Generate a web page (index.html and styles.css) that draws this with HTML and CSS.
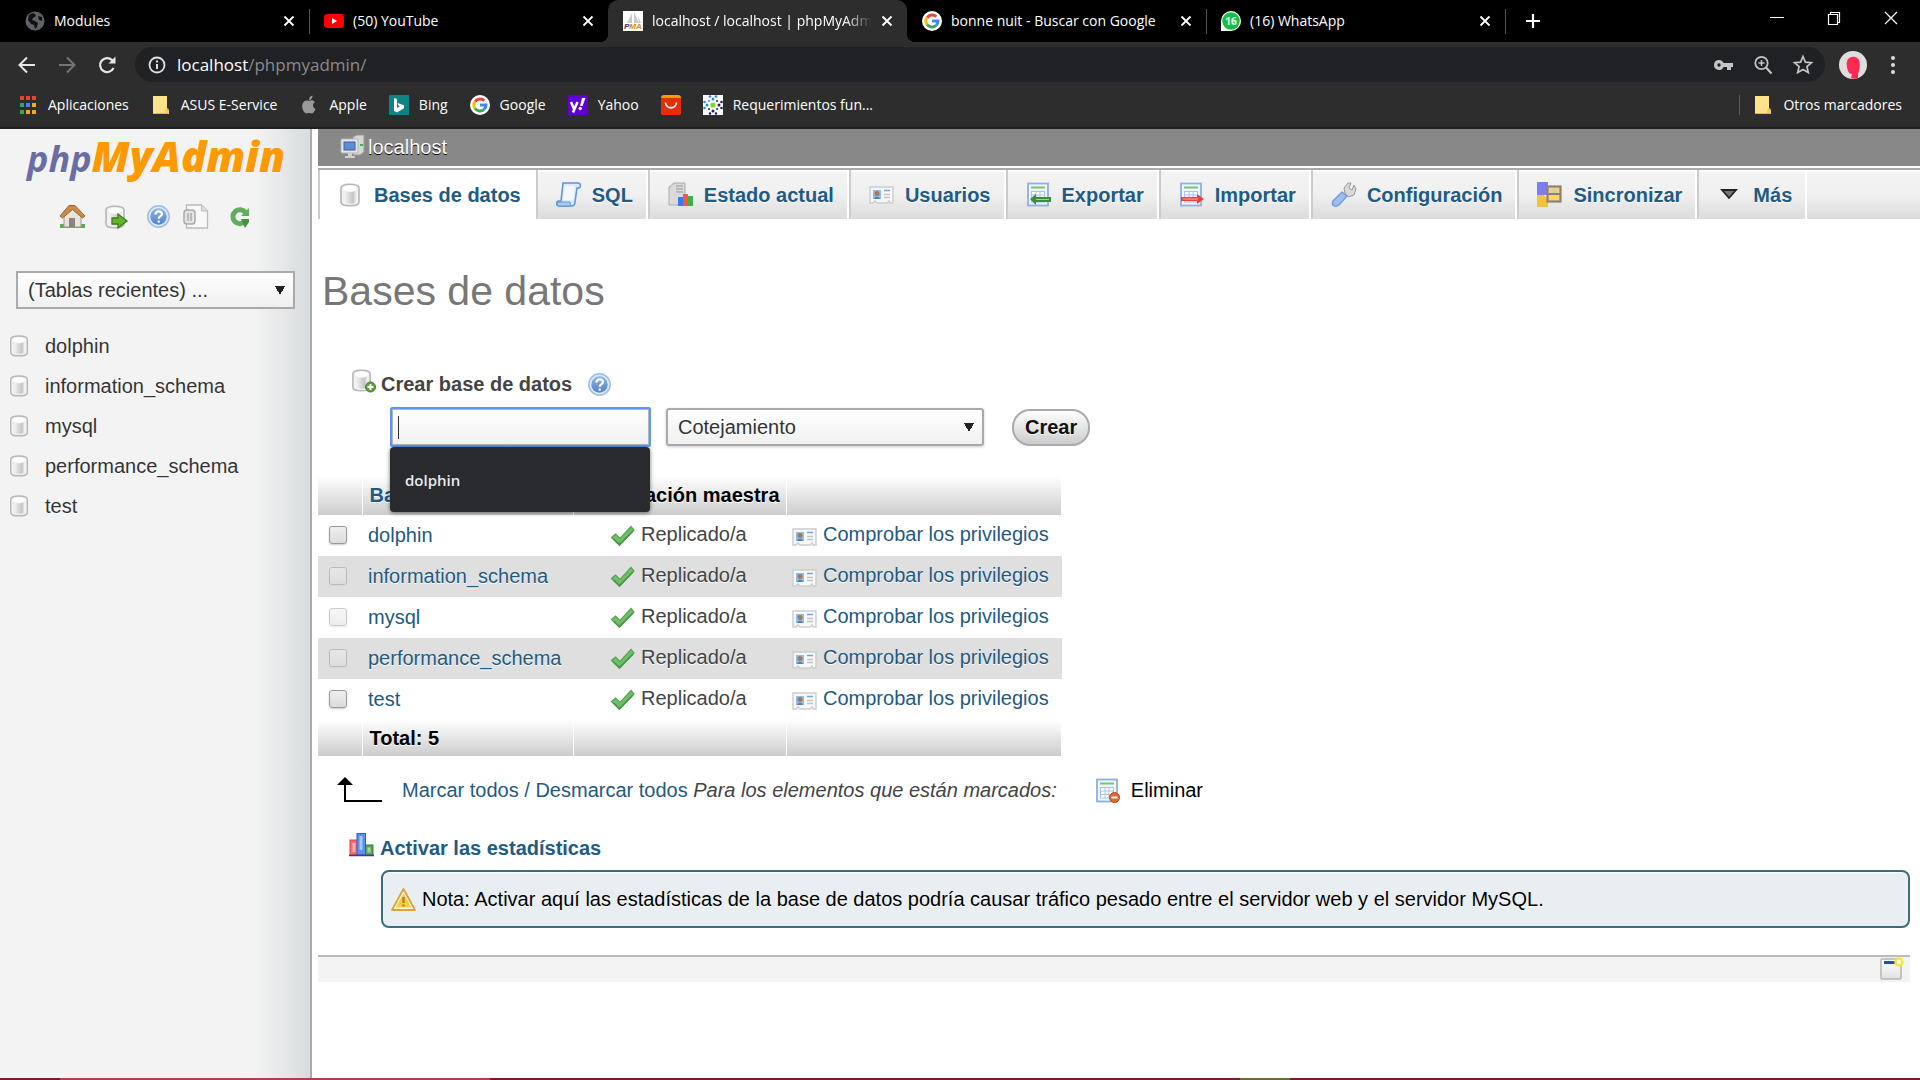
FILE: index.html
```html
<!DOCTYPE html>
<html lang="es">
<head>
<meta charset="utf-8">
<title>localhost / localhost | phpMyAdmin</title>
<link rel="stylesheet" href="styles.css">
</head>
<body>
<svg class="defs" aria-hidden="true">
  <defs>
    <linearGradient id="g-metal" x1="0" x2="1"><stop offset="0" stop-color="#f4f4f4"/><stop offset=".45" stop-color="#d8d8d8"/><stop offset=".75" stop-color="#c4c4c4"/><stop offset="1" stop-color="#ececec"/></linearGradient>
    <linearGradient id="g-blue" x1="0" x2="0" y1="0" y2="1"><stop offset="0" stop-color="#8fb6e6"/><stop offset="1" stop-color="#4f83c8"/></linearGradient>
    <linearGradient id="g-page" x1="0" x2="0" y1="0" y2="1"><stop offset="0" stop-color="#fff"/><stop offset="1" stop-color="#e2e2e2"/></linearGradient>
  </defs>
  <symbol id="close" viewBox="0 0 12 12"><path d="M1.500 1.500l9 9M10.500 1.500l-9 9" stroke="#fff" stroke-width="1.800" fill="none"/></symbol>
  <symbol id="google" viewBox="0 0 20 20"><circle cx="10" cy="10" r="10" fill="#fff"/><g fill="none" stroke-width="3"><path d="M5.200 6.500A6 6 0 0 1 14.300 5.800" stroke="#ea4335"/><path d="M5.100 13.500A6 6 0 0 1 5.200 6.500" stroke="#fbbc05"/><path d="M14 14.500A6 6 0 0 1 5.100 13.500" stroke="#34a853"/><path d="M10 10h6A6 6 0 0 1 14 14.500" stroke="#4285f4"/></g></symbol>
  <symbol id="folder" viewBox="0 0 20 20"><path d="M2 1h14v13l2 1v4H2z" fill="#ffe38b"/><path d="M2 18.500h15v-5l-2 1v4" fill="none" stroke="#e2b53c"/></symbol>
  <symbol id="db" viewBox="0 0 25 25"><path d="M3 6c0-5 18-5 18 0v14c0 5-18 5-18 0z" fill="#f1f1f1" stroke="#b6b6b6" stroke-width="1.600"/><path d="M6 8c3 3 9 3 12 0v12c-3 2-9 2-12 0z" fill="url(#g-metal)"/><ellipse cx="12" cy="6.500" rx="6.500" ry="3" fill="#fff"/></symbol>
  <symbol id="help" viewBox="0 0 25 25"><circle cx="12.500" cy="12.500" r="10.700" fill="#dce9f8" stroke="#9dbce2" stroke-width="1.500"/><circle cx="12.500" cy="12.500" r="8.200" fill="url(#g-blue)"/><path d="M9.500 10.500c0-4 6.500-4 6.500-.5 0 2.300-3.300 2-3.300 4.700M12.700 16.500v2.200" fill="none" stroke="#fff" stroke-width="2.200"/></symbol>
  <symbol id="tick" viewBox="0 0 25 25"><path d="M1.500 13.500l4-3.500 4.500 4.500L21 2.500l3 3.500L9.500 21.500z" fill="#6fbf68" stroke="#58a354" stroke-width="1.200"/><path d="M3.500 15l6 5.500L23 7" fill="none" stroke="#4a9447" stroke-width="1.500"/></symbol>
  <symbol id="card" viewBox="0 0 25 25"><path d="M1 5h23v16h-3l-1-2-2 2H8l-2-2-2 2H1z" fill="#f8f8f8" stroke="#cdcdcd" stroke-width="1.400"/><rect x="4" y="8" width="8" height="9" fill="#8abdf0"/><circle cx="8" cy="11.500" r="2.500" fill="#a87a54"/><path d="M5 17c1-3 5-3 6 0z" fill="#4a80c0"/><path d="M15 8.500h6" stroke="#6ea6e0" stroke-width="1.500"/><path d="M15 12.500h6M15 15.500h6" stroke="#c4c4c4" stroke-width="1.300"/></symbol>
  <symbol id="sheet" viewBox="0 0 25 25"><rect x="2" y="1.500" width="20" height="22" fill="#eef5fd" stroke="#8fb0e0" stroke-width="1.800"/><path d="M5 5.500h14" stroke="#7cc56e" stroke-width="2"/><rect x="5" y="9" width="14" height="11" fill="#fff"/><path d="M5 9.500h14M5 13h14M5 16.500h14M5 20h14M5.500 9v11M10 9v11M14 9v11M18.500 9v11" stroke="#a9c3e6" fill="none"/></symbol>
</svg>

<header class="browser">
  <div class="tabstrip">
    <div class="tab"><svg class="fav" viewBox="0 0 20 20"><circle cx="10" cy="10" r="9.500" fill="#5f6368"/><path d="M4 4c3-2 5-2 6-1l1 2-3 2-1 2 3 1 3 2-1 4-2 2-1-4-3-1-3-4zM13 5l4 1v4l-3-1z" fill="#111"/></svg><span class="tab-title">Modules</span><button class="x" aria-label="Cerrar"><svg><use href="#close"/></svg></button></div>
    <div class="tab sep"><svg class="fav" viewBox="0 0 20 20"><rect y="3" width="20" height="14" rx="3.500" fill="#f00"/><path d="M8 7l5 3-5 3z" fill="#fff"/></svg><span class="tab-title">(50) YouTube</span><button class="x" aria-label="Cerrar"><svg><use href="#close"/></svg></button></div>
    <div class="tab active"><svg class="fav" viewBox="0 0 20 20"><rect width="20" height="20" fill="#fff"/><path d="M9 2L4 12h5zM11 1v11h5zM15 5l3 7h-2z" fill="#c9c9c9"/><text x="1" y="18" font-size="8" font-family="Liberation Sans, sans-serif" font-weight="bold" font-style="italic" fill="#333366">P<tspan fill="#d58a10">MA</tspan></text></svg><span class="tab-title">localhost / localhost | phpMyAdmin</span><button class="x" aria-label="Cerrar"><svg><use href="#close"/></svg></button></div>
    <div class="tab"><svg class="fav"><use href="#google"/></svg><span class="tab-title">bonne nuit - Buscar con Google</span><button class="x" aria-label="Cerrar"><svg><use href="#close"/></svg></button></div>
    <div class="tab sep"><svg class="fav" viewBox="0 0 20 20"><path d="M0 20V10A10 10 0 1 1 10 20z" fill="#fff"/><circle cx="10" cy="10" r="8.800" fill="#12c143"/><text x="10" y="14" text-anchor="middle" font-size="10" font-weight="bold" font-family="Open Sans, sans-serif" fill="#fff">16</text></svg><span class="tab-title">(16) WhatsApp</span><button class="x" aria-label="Cerrar"><svg><use href="#close"/></svg></button></div>
    <button class="newtab sep" aria-label="Nueva pestaña"><svg viewBox="0 0 16 16"><path d="M8 1v14M1 8h14" stroke="#fff" stroke-width="2.200"/></svg></button>
    <div class="winctl">
      <button aria-label="Minimizar"><svg viewBox="0 0 14 14"><path d="M0 6.500h14" stroke="#fff"/></svg></button>
      <button aria-label="Restaurar"><svg viewBox="0 0 14 14"><path d="M1.500 3.500h9v10h-9zM3.500 3V1.500h9v10H11" fill="none" stroke="#fff" stroke-width="1.200"/></svg></button>
      <button aria-label="Cerrar ventana"><svg viewBox="0 0 14 14"><path d="M1 1l12 12M13 1L1 13" stroke="#fff" stroke-width="1.200"/></svg></button>
    </div>
  </div>

  <div class="toolbar">
    <button class="tool" aria-label="Atrás"><svg viewBox="0 0 20 20"><path d="M18 10H3M10 2.500L2.500 10l7.500 7.500" fill="none" stroke="#e6e6e6" stroke-width="2"/></svg></button>
    <button class="tool" aria-label="Adelante"><svg viewBox="0 0 20 20"><path d="M2 10h15M10 2.500l7.500 7.500-7.500 7.500" fill="none" stroke="#757575" stroke-width="2"/></svg></button>
    <button class="tool" aria-label="Recargar"><svg viewBox="0 0 20 20"><path d="M16.500 13A7 7 0 1 1 15 5l1.500 2" fill="none" stroke="#e6e6e6" stroke-width="2.200"/><path d="M18.500 1.500v7h-7z" fill="#e6e6e6"/></svg></button>
    <div class="omnibox">
      <svg viewBox="0 0 20 20"><circle cx="10" cy="10" r="7.500" fill="none" stroke="#e0e0e0" stroke-width="1.800"/><path d="M10 9v5M10 5.500v2" stroke="#e0e0e0" stroke-width="2"/></svg>
      <span class="url">localhost<span>/phpmyadmin/</span></span>
      <svg viewBox="0 0 20 20"><path d="M6 5a5 5 0 1 0 4.600 7H14v3h4v-3h2V8h-9.400A5 5 0 0 0 6 5zm0 3.300a1.700 1.700 0 1 1 0 3.400 1.700 1.700 0 0 1 0-3.400z" fill="#c4c4c4"/></svg>
      <svg viewBox="0 0 20 20"><circle cx="8.500" cy="8" r="6.200" fill="none" stroke="#c4c4c4" stroke-width="1.800"/><path d="M13 12.500l5.500 6" stroke="#c4c4c4" stroke-width="2.200"/><path d="M8.500 5v6M5.500 8h6" stroke="#c4c4c4" stroke-width="1.500"/></svg>
      <svg viewBox="0 0 20 20"><path d="M10 1.500l2.400 5.600 6.100.5-4.600 4 1.400 6-5.300-3.200-5.300 3.200 1.400-6-4.600-4 6.100-.5z" fill="none" stroke="#c4c4c4" stroke-width="1.700"/></svg>
    </div>
    <button class="avatar" aria-label="Perfil"><svg viewBox="0 0 28 28"><circle cx="14" cy="14" r="14" fill="#dedede"/><path d="M9 20C5 8 11 5 16 6c6 1 5 9 4 14l-1 3v4c-2 1-5 1-7 0l1-4c-2 0-3-1-4-3z" fill="#ff2850"/></svg></button>
    <button class="dots" aria-label="Menú"><svg viewBox="0 0 6 20"><circle cx="3" cy="3" r="2" fill="#ddd"/><circle cx="3" cy="10" r="2" fill="#ddd"/><circle cx="3" cy="17" r="2" fill="#ddd"/></svg></button>
  </div>

  <nav class="bookmarks">
    <a href="#"><svg viewBox="0 0 20 20"><path d="M2 1h4v4H2zM8 1h4v4H8zM14 1h4v4h-4z" fill="#ea4335"/><path d="M2 8h4v4H2zM2 15h4v4H2z" fill="#34a853"/><path d="M8 8h4v4H8z" fill="#4285f4"/><path d="M14 8h4v4h-4zM8 15h4v4H8zM14 15h4v4h-4z" fill="#f5a623"/></svg>Aplicaciones</a>
    <a href="#"><svg><use href="#folder"/></svg>ASUS E-Service</a>
    <a href="#"><svg viewBox="0 0 20 20"><path d="M10 6c2-1 4-1.200 6 1-3 2-2.500 5.500.5 7-1 3-3 5-4.500 4.500-1.500-.6-2.500-.6-4 0C5.500 19 3 14.500 3.200 11 3.400 6.500 7 4.500 10 6zM10 5c0-2.500 1.500-4 3.500-4.500C13.700 3 12 5 10 5z" fill="#9a9a9a"/></svg>Apple</a>
    <a href="#"><svg viewBox="0 0 20 20"><rect width="20" height="20" fill="#0c8484"/><path d="M5 3l3 1v9l3-1.700-1.500-.8L8.500 8 15 10.300v3L8 17.500 5 16z" fill="#fff"/></svg>Bing</a>
    <a href="#"><svg><use href="#google"/></svg>Google</a>
    <a href="#"><svg viewBox="0 0 20 20"><rect width="20" height="20" fill="#6001d2"/><path d="M3 7l3 7M9.500 7L5 17.500" stroke="#fff" stroke-width="2.500" fill="none"/><path d="M14 3h3.500L14.500 11H12z" fill="#fff"/><circle cx="12.200" cy="13.500" r="1.700" fill="#fff"/></svg>Yahoo</a>
    <a href="#" aria-label="AliExpress"><svg viewBox="0 0 20 20"><rect width="20" height="20" rx="3" fill="#ff9a00"/><path d="M0 3h20v14a3 3 0 0 1-3 3H3a3 3 0 0 1-3-3z" fill="#e62e04"/><path d="M4.500 7.500c.5 7 10.500 7 11 0" fill="none" stroke="#fff" stroke-width="1.800"/></svg></a>
    <a href="#"><svg viewBox="0 0 20 20"><rect width="20" height="20" fill="#fff"/><circle cx="10" cy="10" r="2.600" fill="#6fe01c"/><g fill="#2c8bd0"><circle cx="7" cy="1.500" r="1.300"/><circle cx="13" cy="1.500" r="1.300"/><circle cx="10" cy="4" r="1.500"/><circle cx="1.500" cy="7" r="1.300"/><circle cx="4" cy="10" r="1.500"/><circle cx="1.500" cy="13" r="1.300"/><circle cx="6" cy="6" r="1"/></g><g fill="#20205c"><circle cx="18.500" cy="7" r="1.300"/><circle cx="16" cy="10" r="1.500"/><circle cx="18.500" cy="13" r="1.300"/><circle cx="7" cy="18.500" r="1.300"/><circle cx="13" cy="18.500" r="1.300"/><circle cx="10" cy="16" r="1.500"/><circle cx="14" cy="14" r="1"/><circle cx="6" cy="14" r="1"/><circle cx="14" cy="6" r="1"/></g></svg>Requerimientos fun...</a>
    <span class="others"><a href="#"><svg><use href="#folder"/></svg>Otros marcadores</a></span>
  </nav>
</header>

<div class="page">
  <aside class="side">
    <a class="logo" href="#"><span>php</span>MyAdmin</a>
    <nav class="side-icons">
      <a href="#" aria-label="Inicio"><svg viewBox="0 0 25 25"><path d="M0 20h25v4H0z" fill="#5da956"/><path d="M4 12l8.500-7 8.500 7v11H4z" fill="#e8e4dc" stroke="#a59c8c"/><path d="M9 14h6v9H9z" fill="#8b8580"/><path d="M0 12L9 1.500h6L25 12l-2.500 2L12.500 5.500 2.500 14z" fill="#c98a4a" stroke="#9b6430"/></svg></a>
      <a href="#" aria-label="Salir"><svg viewBox="-3 0 25 25"><use href="#db" x="-2" y="0" width="25" height="25"/><path d="M7 14h6v-4l9 7-9 7v-4H7z" fill="#64b32f" stroke="#3d7d1c" stroke-width="1.300"/></svg></a>
      <a href="#" aria-label="Documentación"><svg viewBox="-2 0 25 25"><use href="#help" width="25" height="25"/></svg></a>
      <a href="#" aria-label="Documentación de MySQL"><svg viewBox="3 0 25 25"><path d="M3.500 1h15l6 6v17h-21z" fill="#f8f8f8" stroke="#bbb" stroke-width="1.300"/><path d="M18.500 1v6h6" fill="#ddd" stroke="#bbb"/><rect x="1" y="6" width="11" height="14" rx="3" fill="#e4e4e4" stroke="#aaa" stroke-width="1.500"/><path d="M5 9v8M8 9v8" stroke="#aaa" stroke-width="1.500"/></svg></a>
      <a href="#" aria-label="Recargar"><svg viewBox="0 0 25 25"><path d="M17 17.500A7 7 0 1 1 17.500 8.500" fill="none" stroke="#5fae5b" stroke-width="5"/><path d="M13 12l8-8v8z" fill="#5fae5b"/><path d="M13 15h8v3l-4 6z" fill="#488f45"/></svg></a>
    </nav>
    <select class="recent" aria-label="Tablas recientes"><option>(Tablas recientes) ...</option></select>
    <ul class="dblist">
      <li><svg><use href="#db"/></svg><a href="#">dolphin</a></li>
      <li><svg><use href="#db"/></svg><a href="#">information_schema</a></li>
      <li><svg><use href="#db"/></svg><a href="#">mysql</a></li>
      <li><svg><use href="#db"/></svg><a href="#">performance_schema</a></li>
      <li><svg><use href="#db"/></svg><a href="#">test</a></li>
    </ul>
  </aside>

  <main class="main">
    <div class="server"><svg viewBox="0 0 25 25"><path d="M13 3l4-2h7v17l-4 3h-7z" fill="#d6d6d6" stroke="#999"/><path d="M20 11h3" stroke="#3bb54a" stroke-width="2"/><rect x="1" y="5" width="17" height="14" rx="1" fill="#e6e6e6" stroke="#b5b5b5"/><rect x="4" y="8" width="11" height="8" fill="#5f8bd8" stroke="#3d5f9c"/><path d="M8 19h4v3h3v2H5v-2h3z" fill="#cfcfcf"/></svg><a href="#">localhost</a></div>
    <nav class="menu">
      <a class="on" href="#"><svg><use href="#db"/></svg>Bases de datos</a>
      <a href="#"><svg viewBox="0 0 25 25"><path d="M7 1h15c3 0 3 5 1 5h-2l-2 14c0 3-2 4-4 4H3c-3 0-3-5 0-5h2z" fill="#dcebfb" stroke="#5e93d4" stroke-width="1.500"/><path d="M2 20h12c1 2 0 4 0 4H3c-2 0-2-4-1-4z" fill="#a9ccf2" stroke="#5e93d4"/><path d="M9 4h10l-2 14H7z" fill="#f3f9ff"/></svg>SQL</a>
      <a href="#"><svg viewBox="0 0 25 25"><path d="M1 5l5-4h11v17l-4 5H1z" fill="#dadada" stroke="#aaa"/><path d="M8 4h7M8 7h7M8 10h7" stroke="#999"/><rect x="10" y="15" width="5" height="9" fill="#3a7be0"/><rect x="15" y="12" width="5" height="12" fill="#f0584c"/><rect x="20" y="14" width="5" height="10" fill="#3fae49"/></svg>Estado actual</a>
      <a href="#"><svg><use href="#card"/></svg>Usuarios</a>
      <a href="#"><svg viewBox="0 0 25 25"><use href="#sheet" width="25" height="25"/><path d="M4 17l6-5v3h15v5H10v3z" fill="#3c8c3c"/><path d="M10 17.500h13" stroke="#9bd39b"/></svg>Exportar</a>
      <a href="#"><svg viewBox="0 0 25 25"><use href="#sheet" width="25" height="25"/><path d="M2 15h16v-3l7 5-7 5v-3H2z" fill="#ee3d3d"/><path d="M4 17h15" stroke="#ffaaaa"/></svg>Importar</a>
      <a href="#"><svg viewBox="0 0 25 25"><path d="M14 11l-1-5 4-5 3 0-2 5 3 2 2-5 2 4-2 6-6 2z" fill="#d9d9d9" stroke="#999"/><path d="M11 10l5 4-8 9c-4 3-8 0-6-4z" fill="#9bbdf0" stroke="#7099d6" stroke-width="1.300"/></svg>Configuración</a>
      <a href="#"><svg viewBox="0 0 25 25"><path d="M0 0h11v13H0z" fill="#7c7cf5"/><path d="M0 13h7l4 5v7H0z" fill="#f2c33a"/><rect x="10.500" y="4.500" width="13" height="15" fill="#f5d76a" stroke="#8b8178" stroke-width="2.200"/><path d="M10 12h13" stroke="#8b8178" stroke-width="2"/><path d="M13 7h8v4h-8z" fill="#d8cfa8"/></svg>Sincronizar</a>
      <a href="#"><svg viewBox="0 0 25 25"><path d="M5 8h14l-7 8z" fill="#777" stroke="#222" stroke-width="1.800"/></svg>Más</a>
    </nav>

    <div class="content">
      <h1>Bases de datos</h1>

      <form class="create">
        <div class="create-head"><svg class="ic raised" viewBox="0 0 25 25"><use href="#db" x="-1" width="24" height="24"/><circle cx="19.500" cy="19" r="5" fill="#5aa13c" stroke="#3e7c28"/><path d="M19.500 16v6M16.500 19h6" stroke="#fff" stroke-width="2"/></svg><label for="newdb">Crear base de datos</label><a href="#" aria-label="Ayuda"><svg class="ic"><use href="#help"/></svg></a></div>
        <div class="create-row">
          <div class="field"><input id="newdb" type="text"><span class="caret"></span><div class="suggest">dolphin</div></div>
          <select class="collation" aria-label="Cotejamiento"><option>Cotejamiento</option></select>
          <button type="button" class="go">Crear</button>
        </div>
      </form>

      <table class="dbs">
        <thead><tr><th class="c1"></th><th class="c2"><a href="#">Base de datos</a></th><th class="c3">Replicación maestra</th><th class="c4"></th></tr></thead>
        <tbody>
          <tr><td><input type="checkbox" aria-label="dolphin"></td><td><a href="#">dolphin</a></td><td class="rep"><svg><use href="#tick"/></svg>Replicado/a</td><td class="priv"><a href="#"><svg><use href="#card"/></svg>Comprobar los privilegios</a></td></tr>
          <tr><td><input type="checkbox" disabled aria-label="information_schema"></td><td><a href="#">information_schema</a></td><td class="rep"><svg><use href="#tick"/></svg>Replicado/a</td><td class="priv"><a href="#"><svg><use href="#card"/></svg>Comprobar los privilegios</a></td></tr>
          <tr><td><input type="checkbox" disabled aria-label="mysql"></td><td><a href="#">mysql</a></td><td class="rep"><svg><use href="#tick"/></svg>Replicado/a</td><td class="priv"><a href="#"><svg><use href="#card"/></svg>Comprobar los privilegios</a></td></tr>
          <tr><td><input type="checkbox" disabled aria-label="performance_schema"></td><td><a href="#">performance_schema</a></td><td class="rep"><svg><use href="#tick"/></svg>Replicado/a</td><td class="priv"><a href="#"><svg><use href="#card"/></svg>Comprobar los privilegios</a></td></tr>
          <tr><td><input type="checkbox" aria-label="test"></td><td><a href="#">test</a></td><td class="rep"><svg><use href="#tick"/></svg>Replicado/a</td><td class="priv"><a href="#"><svg><use href="#card"/></svg>Comprobar los privilegios</a></td></tr>
        </tbody>
        <tfoot><tr><th></th><th>Total: 5</th><th></th><th></th></tr></tfoot>
      </table>

      <div class="bulk">
        <svg class="arrow" viewBox="0 0 46 26"><path d="M8 6v18h37" fill="none" stroke="#000" stroke-width="2"/><path d="M0 8l8-8 8 8z"/></svg>
        <span><a href="#">Marcar todos</a> <a href="#">/</a> <a href="#">Desmarcar todos</a> <i>Para los elementos que están marcados:</i></span>
        <button type="button" class="drop"><svg class="ic" viewBox="0 0 25 25"><use href="#sheet" width="25" height="25"/><circle cx="19.500" cy="19.500" r="5" fill="#e8662a" stroke="#b9481a"/><path d="M16.500 19.500h6" stroke="#fff" stroke-width="2"/></svg>Eliminar</button>
      </div>

      <div class="stats"><svg class="ic raised" viewBox="0 0 25 25"><rect x="1" y="8" width="8" height="15" fill="#ff6b6b" stroke="#d43c4c"/><path d="M3.500 11h3v9h-3z" fill="#ffb0b0"/><rect x="16" y="13" width="8" height="10" fill="#5aa75a" stroke="#357a35"/><path d="M18.500 15.500h3v5h-3z" fill="#a4d6a0"/><rect x="8" y="1.500" width="8.500" height="21.500" fill="#5b90ee" stroke="#2c5cc4"/><path d="M10.500 4h3v14h-3z" fill="#a5c5fb"/><path d="M0 23.500h25" stroke="#43359a" stroke-width="1.500"/></svg><a href="#">Activar las estadísticas</a></div>
      <div class="note"><svg class="ic" viewBox="0 0 25 25"><path d="M12.500 2L24 23H1z" fill="#fff8e0" stroke="#dda23c" stroke-width="1.800" stroke-linejoin="round"/><path d="M12.500 6.500l8 14h-16z" fill="#f4ce48"/><path d="M12.500 10v6M12.500 17.500v2" stroke="#b98718" stroke-width="2.500"/></svg>Nota: Activar aquí las estadísticas de la base de datos podría causar tráfico pesado entre el servidor web y el servidor MySQL.</div>

      <footer class="foot"><a href="#" aria-label="Abrir nueva ventana"><svg class="ic" viewBox="0 0 25 25"><rect x="2" y="2" width="20" height="20" rx="1" fill="url(#g-page)" stroke="#b5b5b5" stroke-width="1.500"/><path d="M5 5.500h13" stroke="#22549c" stroke-width="3"/><circle cx="20" cy="5" r="3.500" fill="#fffce0" stroke="#f5e636" stroke-width="2.500"/></svg></a></footer>
    </div>
  </main>
</div>
<div class="taskbar"></div>
</body>
</html>
```
FILE: styles.css
```css
* { box-sizing: border-box; }
body {
  margin: 0;
  min-height: 100vh;
  display: flex;
  flex-direction: column;
  background: #fff;
  color: #444;
  font: 20px/24px "Liberation Sans", Arial, sans-serif;
}
a { color: #235a81; text-decoration: none; }
button { border: 0; padding: 0; background: none; font: inherit; }
svg { display: block; flex: none; overflow: visible; }
.defs { position: absolute; width: 0; height: 0; }
.ic { width: 25px; height: 25px; }
.raised { margin-bottom: 8px; }

/* browser window */
.browser {
  background: #2d2d2d;
  border-bottom: 2px solid #202020;
  color: #fff;
  font: 14px/20px "Open Sans", "Noto Sans", sans-serif;
}
.tabstrip { display: flex; height: 42px; padding-left: 10px; background: #000; }
.tab {
  flex: 0 1 299px;
  min-width: 0;
  display: flex;
  align-items: center;
  padding: 0 14px 0 15px;
  position: relative;
}
.fav { width: 20px; height: 20px; margin-right: 9px; }
.tab-title { flex: 1; overflow: hidden; white-space: nowrap; margin-right: 9px; }
.x svg { width: 12px; height: 12px; }
.sep::before {
  content: "";
  position: absolute;
  left: 0;
  top: 9px;
  width: 1px;
  height: 25px;
  background: #555;
}
.active { background: #2d2d2d; border-radius: 10px 10px 0 0; }
.active .tab-title { -webkit-mask-image: linear-gradient(90deg, #000 88%, transparent); mask-image: linear-gradient(90deg, #000 88%, transparent); }
.active::before, .active::after {
  content: "";
  position: absolute;
  bottom: 0;
  width: 8px;
  height: 8px;
}
.active::before { right: 100%; background: radial-gradient(circle at 0 0, #000 8px, #2d2d2d 8px); }
.active::after { left: 100%; background: radial-gradient(circle at 100% 0, #000 8px, #2d2d2d 8px); }
.newtab { position: relative; padding: 0 20px; }
.newtab svg { width: 16px; height: 16px; }
.winctl { display: flex; margin-left: auto; gap: 43px; padding: 0 22px 6px 0; align-items: center; }
.winctl svg { width: 14px; height: 14px; }

.toolbar { display: flex; align-items: center; padding: 5px 24px 0 17px; }
.tool { margin-right: 20px; }
.tool svg, .omnibox svg { width: 20px; height: 20px; }
.omnibox {
  flex: 1;
  display: flex;
  align-items: center;
  gap: 20px;
  height: 35px;
  padding: 0 12px;
  border-radius: 18px;
  background: #202124;
}
.url { flex: 1; margin-left: -10px; font-size: 17px; line-height: 24px; }
.url span { color: #8a8b8d; }
.tool + .omnibox { margin-left: -2px; }
.avatar { margin: 0 23px 0 14px; }
.avatar svg { width: 28px; height: 28px; }
.dots svg { width: 6px; height: 20px; }

.bookmarks { display: flex; align-items: center; gap: 22px; height: 45px; padding: 0 18px; }
.bookmarks a { display: flex; align-items: center; gap: 10px; color: #fff; white-space: nowrap; }
.bookmarks svg { width: 20px; height: 20px; }
.others { margin-left: auto; border-left: 1px solid #606060; padding-left: 13px; }

/* phpMyAdmin */
.page { flex: 1; display: grid; grid-template-columns: 312px 1fr; text-shadow: 0 1px 0 #fff; }
.side {
  border-right: 2px solid #aaa;
  background: linear-gradient(90deg, transparent calc(100% - 56px), #d8dcde) #f3f3f3;
}
.logo {
  display: flex;
  align-items: baseline;
  justify-content: center;
  margin-top: 2px;
  padding-left: 2px;
  color: #f90;
  font: italic 800 42px/50px "Open Sans", sans-serif;
}
.logo span { color: #6c6ca4; font-size: 36px; font-weight: 700; }
.side-icons { display: flex; gap: 17px; padding: 20px 0 0 60px; }
.side-icons svg { width: 25px; height: 25px; }
select {
  appearance: none;
  color: #333;
  font: inherit;
  text-shadow: inherit;
  padding: 0 10px;
  border: 2px solid #aaa;
  background:
    conic-gradient(from -30deg at 50% 100%, #222 60deg, transparent 0) no-repeat right 8px center / 10px 9px,
    linear-gradient(#fff, #f0f0f0);
  border-radius: 0;
}
.recent { display: block; width: 279px; height: 38px; margin: 42px 0 0 16px; }
.dblist { list-style: none; margin: 17px 0 0; padding: 0; }
.dblist li { display: flex; align-items: center; gap: 13px; height: 39px; padding-left: 7px; }
.dblist li + li { margin-top: 1px; }
.dblist svg { width: 25px; height: 23px; }
.dblist a { color: #333; }

.main { padding-left: 6px; min-width: 0; }
.server { display: flex; align-items: center; gap: 3px; height: 37px; padding: 0 0 2px 22px; background: #888; }
.server svg { width: 25px; height: 25px; }
.server a { color: #fff; text-shadow: 0 1px 0 #000; }
.menu {
  display: flex;
  height: 51px;
  margin-top: 2px;
  border-top: 2px solid #aaa;
  background: linear-gradient(#fff, #f3f3f3 6%, #f0f0f0 50%, #dcdcdc);
}
.menu a {
  display: flex;
  align-items: center;
  gap: 11px;
  padding: 0 13px 0 18px;
  border-left: 2px solid #ccc;
  border-right: 2px solid #fff;
  font-weight: bold;
  white-space: nowrap;
}
.menu a.on { background: #fff; }
.menu svg { width: 25px; height: 25px; }

.content { padding-right: 10px; }
h1 { margin: 48px 0 57px 4px; font-size: 41px; line-height: 48px; font-weight: normal; color: #777; }
.create-head { display: flex; align-items: center; height: 24px; padding-left: 33px; font-weight: bold; }
.create-head label { margin: 0 15px 0 5px; }
.create-row { display: flex; align-items: center; height: 40px; margin: 11px 0 29px; padding-left: 72px; }
.field { position: relative; width: 261px; margin-right: 15px; }
.field input {
  display: block;
  width: 100%;
  height: 40px;
  padding: 0 8px;
  font: inherit;
  border: 2px solid #5b95f5;
  border-radius: 2px;
  background: linear-gradient(#fff, #f0f0f0);
  box-shadow: inset 0 0 0 1px #b5b5b5;
}
.caret { position: absolute; left: 8px; top: 9px; width: 1px; height: 23px; background: #333; }
.suggest {
  position: absolute;
  top: 100%;
  left: 0;
  width: 260px;
  padding: 21px 15px 20px;
  border-radius: 4px;
  background: #292a2d;
  box-shadow: 0 1px 4px #0008;
  color: #e8eaed;
  font: 600 15px/24px "Open Sans", "Noto Sans", sans-serif;
  text-shadow: none;
}
.collation { width: 318px; height: 38px; border-radius: 3px; box-shadow: 0 1px 3px #ccc; }
.go {
  height: 37px;
  margin-left: 28px;
  padding: 0 11px;
  border: 2px solid #aaa;
  border-radius: 18px;
  background: linear-gradient(#fff, #ccc);
  color: #111;
  font-weight: bold;
  text-shadow: inherit;
}

.dbs { border-collapse: collapse; table-layout: fixed; width: 744px; }
.c1 { width: 44px; }
.c2 { width: 211px; }
.c3 { width: 213px; }
.dbs th {
  height: 39px;
  padding: 0 7px 2px;
  border-right: 1px solid #fff;
  background: linear-gradient(#fff, #ccc);
  color: #000;
  text-align: left;
  white-space: nowrap;
}
.dbs th.c3 { padding-right: 6px; text-align: right; }
.dbs tfoot th { height: 36px; padding-bottom: 0; }
.dbs td { height: 41px; padding: 0 6px 1px; white-space: nowrap; }
.dbs td:first-child { padding-left: 11px; }
.dbs tbody tr:nth-child(even) { background: #dfdfdf; }
.dbs td svg { display: inline-block; width: 25px; height: 25px; margin-right: 6px; vertical-align: -8px; }
.dbs td.rep { padding-left: 37px; }
input[type="checkbox"] {
  appearance: none;
  display: block;
  width: 18px;
  height: 18px;
  margin: 0;
  border: 1px solid #999;
  border-radius: 3px;
  background: linear-gradient(#eee, #dcdcdc);
  box-shadow: 0 1px 2px #ccc;
}
input[type="checkbox"]:disabled { opacity: .5; }

.bulk { display: flex; align-items: center; height: 28px; margin: 20px 0 32px; padding-left: 19px; white-space: nowrap; }
.arrow { width: 46px; height: 26px; margin-right: 19px; }
.drop { display: flex; align-items: center; gap: 11px; margin-left: 38px; color: #000; text-shadow: inherit; }
.stats { display: flex; align-items: center; gap: 6px; height: 24px; padding-left: 31px; font-weight: bold; }
.note {
  display: flex;
  align-items: center;
  gap: 6px;
  min-height: 58px;
  margin: 10px 0 27px 63px;
  padding: 0 8px;
  border: 2px solid #3a6c7e;
  border-radius: 8px;
  background: #e8eef1;
  box-shadow: inset 0 1px 2px #fff;
  color: #000;
}
.foot { display: flex; justify-content: flex-end; border-top: 2px solid #bbb; padding-right: 6px; background: #f3f3f3; }

.taskbar { height: 2px; background: linear-gradient(90deg, #7a1d22 60px, #a8444a 0 490px, #7a1d22 0 1240px, #6e6a30 0 1290px, #7a1d22 0); }
```
